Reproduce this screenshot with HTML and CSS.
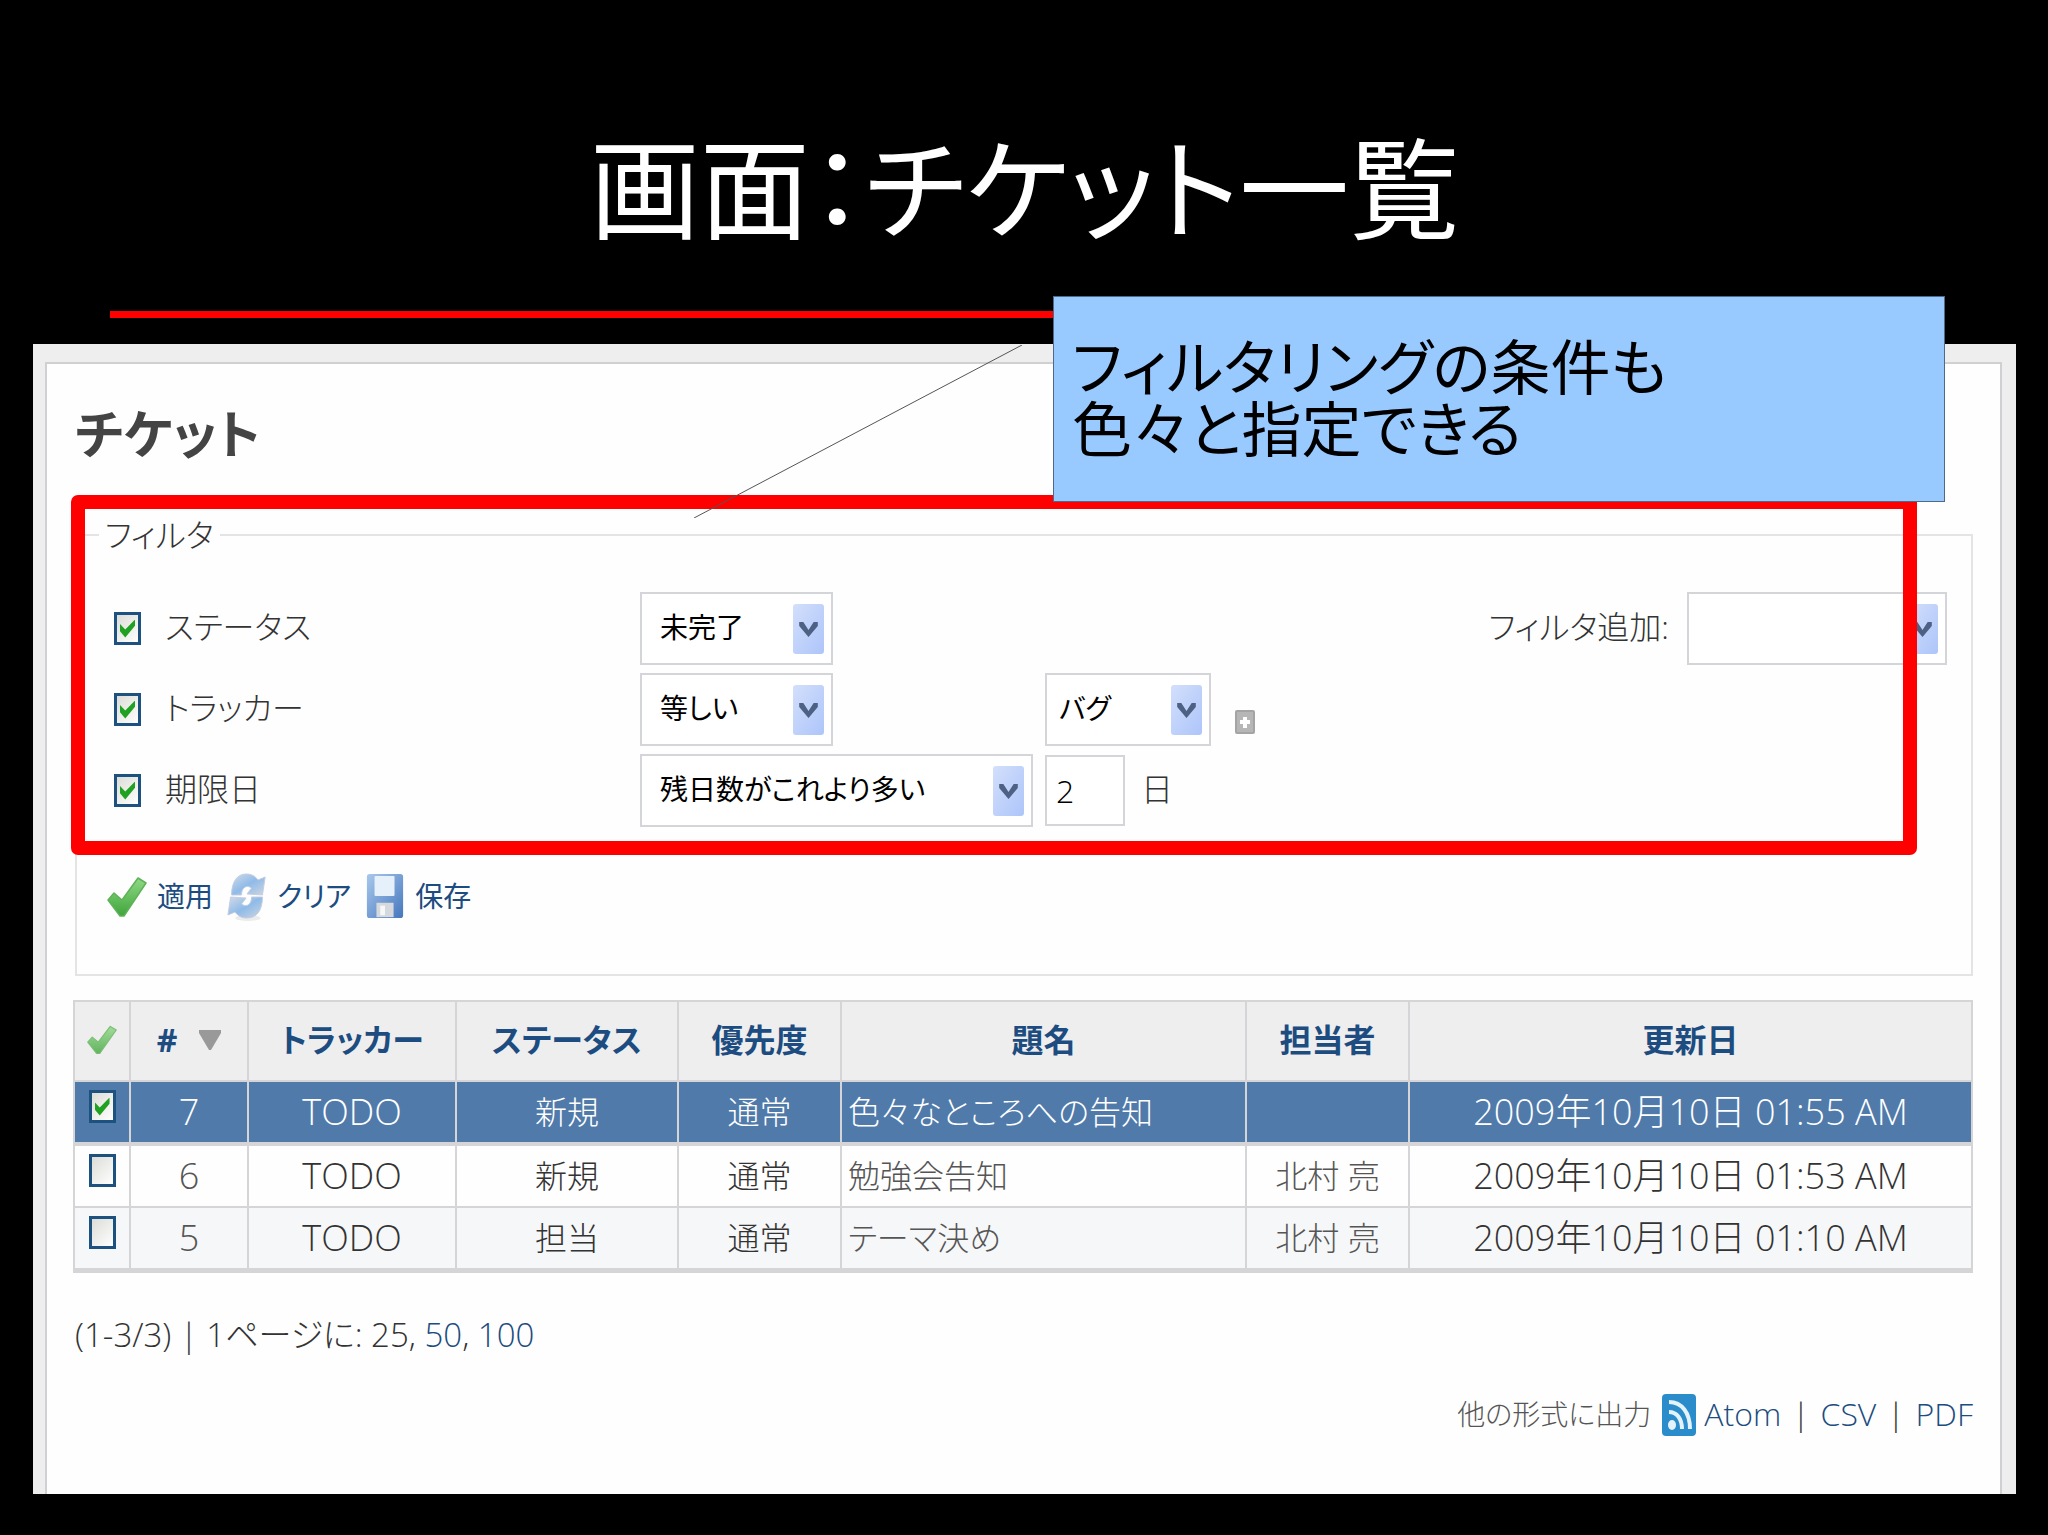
FILE: index.html
```html
<!DOCTYPE html>
<html lang="ja">
<head>
<meta charset="utf-8">
<title>画面：チケット一覧</title>
<link rel="stylesheet" href="styles.css">
</head>
<body>
<svg class="defs" width="0" height="0" aria-hidden="true">
  <defs>
    <linearGradient id="g-green" x1="0" y1="0" x2="0" y2="1"><stop offset="0" stop-color="#8fd986"/><stop offset="1" stop-color="#3fa53a"/></linearGradient>
    <linearGradient id="g-arrow" x1="0" y1="0" x2="1" y2="1"><stop offset="0" stop-color="#d3dffb"/><stop offset="1" stop-color="#adc5fa"/></linearGradient>
    <linearGradient id="g-blue" x1="0" y1="0" x2="1" y2="1"><stop offset="0" stop-color="#a9c8ec"/><stop offset="1" stop-color="#4577bd"/></linearGradient>
    <linearGradient id="g-refresh" x1="0" y1="0" x2="1" y2="1"><stop offset="0" stop-color="#d3dbe8"/><stop offset=".5" stop-color="#8fbbe8"/><stop offset="1" stop-color="#cfd6e2"/></linearGradient>
  </defs>
  <symbol id="i-check" viewBox="0 0 40 42" preserveAspectRatio="none">
    <path d="M1 24l6-7 8 7L31 2l8 5L17 40h-4z" fill="url(#g-green)" stroke="#5fb258" stroke-width="1.5" stroke-linejoin="round"/>
  </symbol>
  <symbol id="i-arrow" viewBox="0 0 30 50" preserveAspectRatio="none">
    <rect width="30" height="50" rx="3" fill="url(#g-arrow)"/>
    <path d="M6 18h4l5 8 5-8h4v4l-9 11-9-11z" fill="#4d6185"/>
  </symbol>
</svg>
<main class="slide">
  <h1 class="slide-title">画面：チケット一覧</h1>
  <div class="rule"></div>

  <section class="panel">
    <div class="content">
      <h2>チケット</h2>

      <form class="filter-area">
        <fieldset class="filters">
          <legend>フィルタ</legend>
          <div class="filter-body">
            <div class="filter-grid">
              <label class="filter-name"><input type="checkbox" class="box" checked>ステータス</label>
              <div class="picker w-s"><select aria-label="ステータスの条件"><option>未完了</option></select><svg class="arrow"><use href="#i-arrow"/></svg></div>
              <div></div>

              <label class="filter-name"><input type="checkbox" class="box" checked>トラッカー</label>
              <div class="picker w-s"><select aria-label="トラッカーの条件"><option>等しい</option></select><svg class="arrow"><use href="#i-arrow"/></svg></div>
              <div class="filter-value">
                <div class="picker w-xs"><select aria-label="トラッカーの値"><option>バグ</option></select><svg class="arrow"><use href="#i-arrow"/></svg></div>
                <button type="button" class="plus" aria-label="複数選択"><svg viewBox="0 0 20 24" preserveAspectRatio="none"><rect width="20" height="24" rx="2" fill="#a4a4a4"/><rect x="2" y="2" width="16" height="20" fill="#b6b6b6"/><path d="M8 7h4v3h3v4h-3v4H8v-4H5v-4h3z" fill="#fff"/></svg></button>
              </div>

              <label class="filter-name"><input type="checkbox" class="box" checked>期限日</label>
              <div class="picker w-m"><select aria-label="期限日の条件"><option>残日数がこれより多い</option></select><svg class="arrow"><use href="#i-arrow"/></svg></div>
              <div class="filter-value"><input type="text" class="days" id="days" value="2"><label for="days">日</label></div>
            </div>
            <div class="add-filter">
              <label for="add">フィルタ追加:</label>
              <div class="picker w-l"><select id="add"><option></option></select><svg class="arrow"><use href="#i-arrow"/></svg></div>
            </div>
          </div>
          <div class="actions">
            <a href="#apply"><svg class="icon" viewBox="0 0 40 48"><use href="#i-check" y="3" width="40" height="42"/></svg>適用</a>
            <a href="#clear"><svg class="icon" viewBox="0 0 44 48" preserveAspectRatio="none">
              <ellipse cx="23" cy="45" rx="14" ry="3" fill="#ececec"/>
              <path d="M5 22C5 9 11 1 21 1c6 0 10 2 13 6l8-3-3 18-17-1 5-6c-6-4-11 0-11 7z" fill="url(#g-refresh)" stroke="#c3cde0"/>
              <path d="M39 24c0 13-6 21-17 21-6 0-10-2-13-6l-8 3 3-18 17 1-5 6c6 4 11 0 11-7z" fill="url(#g-refresh)" stroke="#c3cde0"/>
            </svg>クリア</a>
            <a href="#save"><svg class="icon" viewBox="0 0 42 50" preserveAspectRatio="none">
              <rect x="2" y="1" width="38" height="46" rx="3" fill="url(#g-blue)"/>
              <rect x="10" y="3" width="21" height="21" rx="1" fill="#e6f0fb"/>
              <rect x="12" y="31" width="18" height="15" fill="#d5d8dc"/><rect x="16" y="34" width="5" height="10" fill="#f7f7f7"/>
            </svg>保存</a>
          </div>
        </fieldset>
        <div class="highlight"></div>
      </form>

      <table class="issues">
        <colgroup><col class="c-check"><col class="c-id"><col class="c-tracker"><col class="c-status"><col class="c-priority"><col><col class="c-priority"><col class="c-date"></colgroup>
        <thead>
          <tr>
            <th><svg class="head-check"><use href="#i-check"/></svg></th>
            <th><a href="#id" class="sorted"><span>#</span><svg class="tri" viewBox="0 0 22 20"><path d="M0 0h22v3L12 20h-2L0 3z" fill="#999"/></svg></a></th>
            <th><a href="#tracker">トラッカー</a></th>
            <th><a href="#status">ステータス</a></th>
            <th><a href="#priority">優先度</a></th>
            <th><a href="#subject">題名</a></th>
            <th><a href="#assigned">担当者</a></th>
            <th><a href="#updated">更新日</a></th>
          </tr>
        </thead>
        <tbody>
          <tr class="selected">
            <td class="tick"><input type="checkbox" class="box" aria-label="7" checked></td>
            <td class="latin"><a href="#7">7</a></td><td class="latin">TODO</td><td>新規</td><td>通常</td><td class="subject"><a href="#7">色々なところへの告知</a></td><td></td><td class="latin">2009年10月10日 01:55 AM</td>
          </tr>
          <tr>
            <td class="tick"><input type="checkbox" class="box" aria-label="6"></td>
            <td class="latin"><a href="#6">6</a></td><td class="latin">TODO</td><td>新規</td><td>通常</td><td class="subject"><a href="#6">勉強会告知</a></td><td><a href="#user">北村 亮</a></td><td class="latin">2009年10月10日 01:53 AM</td>
          </tr>
          <tr class="even">
            <td class="tick"><input type="checkbox" class="box" aria-label="5"></td>
            <td class="latin"><a href="#5">5</a></td><td class="latin">TODO</td><td>担当</td><td>通常</td><td class="subject"><a href="#5">テーマ決め</a></td><td><a href="#user">北村 亮</a></td><td class="latin">2009年10月10日 01:10 AM</td>
          </tr>
        </tbody>
      </table>

      <p class="pager">(1-3/3) | 1ページに: 25, <a href="#50">50</a>, <a href="#100">100</a></p>

      <p class="export">
        <span class="export-label">他の形式に出力</span>
        <a href="#atom"><svg class="feed" viewBox="0 0 34 42" preserveAspectRatio="none"><rect width="34" height="42" rx="4" fill="#2a8cca"/><g fill="none" stroke="#e3f2fb" stroke-width="4"><path d="M7 8c13 0 21 11 21 27"/><path d="M7 18c8 0 13 7 13 17"/></g><ellipse cx="10" cy="31" rx="4" ry="5" fill="#e3f2fb"/></svg>Atom</a>
        <span>|</span><a href="#csv">CSV</a><span>|</span><a href="#pdf">PDF</a>
      </p>
    </div>
  </section>

  <aside class="callout">
    <svg class="leader" viewBox="0 0 328 173"><path d="M328 0L0 173" stroke="#555" stroke-width="1"/></svg>
    フィルタリングの条件も<br>色々と指定できる
  </aside>
</main>
</body>
</html>
```
FILE: styles.css
```css
* { box-sizing: border-box; }

body {
  margin: 0;
  background: #000;
  color: #333;
  font-family: "Open Sans", "Noto Sans CJK JP", sans-serif;
  font-size: 32px;
  font-weight: 300;
  font-feature-settings: "palt";
}

h1, h2, p { margin: 0; }
a { color: #1c4c80; text-decoration: none; }
.defs { position: absolute; }

.slide {
  position: relative;
  padding: 102px 32px 40px 33px;
}

.slide-title {
  color: #fff;
  font-family: "Noto Sans CJK JP", sans-serif;
  font-size: 110px;
  font-weight: 400;
  line-height: 162px;
  text-align: center;
}

.rule {
  height: 7px;
  margin: 47px 77px 26px;
  background: #f00;
}

.panel {
  padding: 18px 14px 0 12px;
  background: #efeeef;
}

.content {
  padding: 30px 27px 58px 28px;
  border: 2px solid #d0d0d2;
  border-bottom: 0;
  background: #fefefe;
}

h2 {
  margin-bottom: 41px;
  color: #444;
  font-size: 52px;
  font-weight: 700;
  line-height: 80px;
}

/* Filters */
.filter-area { position: relative; }

.filters {
  min-width: 0;
  margin: 0;
  padding: 0 24px 53px 22px;
  border: 2px solid #e4e4e6;
}

.filters legend {
  padding: 0 6px;
  line-height: 40px;
}

.filter-body {
  display: flex;
  justify-content: space-between;
  padding: 37px 0 0 15px;
}

.filter-grid {
  display: grid;
  grid-template-columns: 526px 405px auto;
  grid-auto-rows: 73px;
  row-gap: 8px;
}

.filter-name, .filter-value, .add-filter {
  display: flex;
  align-items: center;
}

.filter-name { gap: 24px; padding-bottom: 8px; }
.filter-name .box { margin-top: 8px; }
.filter-value { gap: 16px; }
.filter-value label, .add-filter label { padding-bottom: 8px; }
.add-filter { gap: 18px; height: 73px; }

.box {
  display: inline-grid;
  place-content: center;
  width: 27px;
  height: 33px;
  margin: 0;
  appearance: none;
  border: 3px solid #1c5180;
  background: linear-gradient(135deg, #dcdcd7, #fff);
}

.box:checked::before {
  content: "";
  width: 15px;
  height: 18px;
  background: #21a121;
  clip-path: polygon(0 25%, 35% 55%, 100% 0, 100% 35%, 35% 100%, 0 65%);
}

.picker {
  display: grid;
  align-items: center;
  height: 73px;
}

.picker > * { grid-area: 1 / 1; }

.picker select {
  width: 100%;
  height: 100%;
  padding: 0 18px 4px;
  appearance: none;
  border: 2px solid #d3d5d9;
  border-radius: 0;
  background: #fff;
  color: #000;
  font: inherit;
  font-size: 28px;
  font-weight: 400;
}

.w-xs { width: 166px; }
.w-xs select { padding-left: 12px; }
.w-s { width: 193px; }
.w-m { width: 393px; }
.w-l { width: 260px; }

.arrow {
  justify-self: end;
  width: 31px;
  height: 50px;
  margin-right: 9px;
  pointer-events: none;
}

.plus {
  align-self: end;
  width: 20px;
  height: 24px;
  margin: 0 0 12px 8px;
  padding: 0;
  border: 0;
  background: none;
}

.plus svg { display: block; width: 100%; height: 100%; }

.days {
  width: 80px;
  height: 71px;
  padding: 0 9px;
  border: 2px solid #d3d5d9;
  color: #000;
  font: inherit;
}

.actions {
  display: flex;
  gap: 14px;
  margin-top: 46px;
  padding-left: 8px;
  font-size: 28px;
  font-weight: 400;
  line-height: 46px;
}

.actions a {
  display: flex;
  gap: 10px;
}

.icon { width: 40px; height: 48px; }

.highlight {
  position: absolute;
  inset: -20px 56px 121px -4px;
  border: 14px solid #f00;
  border-radius: 7px;
  pointer-events: none;
}

/* Issue list */
.issues {
  width: calc(100% + 2px);
  margin: 24px 0 0 -2px;
  table-layout: fixed;
  border-collapse: collapse;
  border: 2px solid #d5d5d8;
  border-bottom-width: 5px;
  text-align: center;
}

.c-check { width: 56px; }
.c-id { width: 118px; }
.c-tracker { width: 208px; }
.c-status { width: 222px; }
.c-priority { width: 163px; }
.c-date { width: 563px; }

.issues th, .issues td {
  padding: 0;
  border: 2px solid #d5d5d8;
}

.issues th {
  height: 80px;
  background: #eeeeef;
  font-weight: 700;
  line-height: 76px;
  padding-bottom: 2px;
}

.issues td { height: 63px; line-height: 60px; }
.issues td a { color: #555; }
.issues .latin { font-size: 36px; }
.issues .tick { padding-top: 8px; line-height: 0; vertical-align: top; }
.issues .subject { padding-left: 6px; text-align: left; }
.issues .even td { background: #f6f7f9; }
.issues .selected td { background: #507aaa; border-bottom-width: 4px; color: #fff; }
.issues .selected td a { color: #fff; }

.head-check {
  display: block;
  width: 30px;
  height: 30px;
  margin: 0 auto;
  opacity: .8;
}

.sorted {
  display: flex;
  align-items: center;
  justify-content: center;
  gap: 22px;
}

.tri { width: 22px; height: 20px; }

.pager {
  margin-top: 42px;
  font-size: 33px;
  line-height: 40px;
}

.export {
  display: flex;
  justify-content: flex-end;
  gap: 11px;
  margin-top: 39px;
  line-height: 40px;
}

.export a { display: flex; gap: 8px; }
.export-label { color: #555; font-size: 28px; }
.feed { width: 34px; height: 42px; }

/* Callout laid over the panel */
.callout {
  position: absolute;
  top: 296px;
  right: 103px;
  width: 892px;
  height: 206px;
  padding: 42px 18px;
  border: 1px solid #4f6a88;
  background: #99caff;
  color: #000;
  font-family: "Liberation Sans", "Noto Sans CJK JP", sans-serif;
  font-size: 60px;
  font-weight: 400;
  line-height: 62px;
}

.leader {
  position: absolute;
  top: 48px;
  right: 922px;
  width: 328px;
  height: 173px;
}
```
